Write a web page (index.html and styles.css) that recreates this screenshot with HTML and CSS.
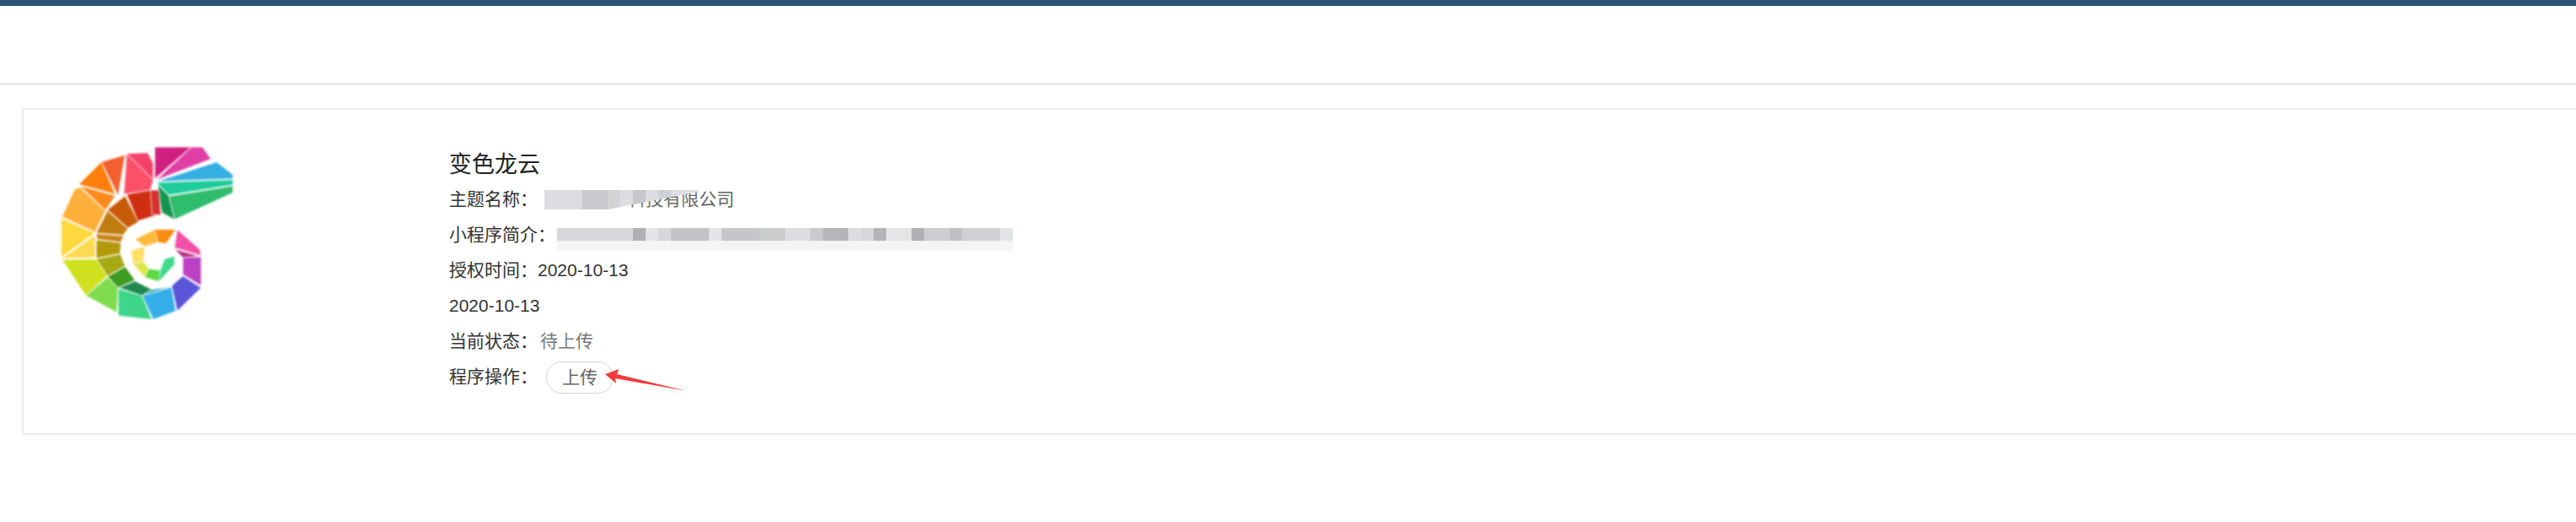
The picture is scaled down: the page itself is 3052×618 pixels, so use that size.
FILE: index.html
```html
<!DOCTYPE html>
<html lang="zh-CN">
<head>
<meta charset="utf-8">
<title>小程序</title>
<link rel="stylesheet" href="styles.css">
</head>
<body>
<div class="topbar"></div>
<header class="header"></header>
<main class="card">
  <svg class="logo" viewBox="96 72 612 612" aria-hidden="true">
    <g stroke="#fff" stroke-opacity=".75" stroke-width="3" stroke-linejoin="round">
      <polygon fill="#d0207f" points="430,72 560,72 430,185"/>
      <polygon fill="#e03fa5" points="560,72 600,72 630,115 435,190"/>
      <polygon fill="#35aee0" points="435,195 650,125 708,170 708,185"/>
      <polygon fill="#1ecb9b" points="437,198 708,188 708,207 480,243"/>
      <polygon fill="#2fbc6c" points="480,247 708,210 708,235 500,330"/>
      <polygon fill="#14944e" points="440,205 480,245 500,330 455,305"/>
      <polygon fill="#f5416a" points="330,95 405,92 425,130 425,190"/>
      <polygon fill="#fb5068" points="330,95 425,190 415,225 320,240"/>
      <polygon fill="#f2602f" points="240,125 325,100 300,245"/>
      <polygon fill="#fd7e0a" points="240,125 160,205 290,240"/>
      <polygon fill="#fd8a1c" points="165,210 290,245 255,298"/>
      <polygon fill="#ffb03a" points="145,222 165,215 255,300 218,375 100,320"/>
      <polygon fill="#ffd83d" points="97,325 218,378 97,465"/>
      <polygon fill="#ffd94f" points="218,385 218,465 100,468"/>
      <polygon fill="#cfe01e" points="100,472 222,470 262,530 185,600"/>
      <polygon fill="#7fdc4e" points="185,600 262,535 300,570 295,660"/>
      <polygon fill="#3ed48a" points="300,575 385,600 420,685 300,672"/>
      <polygon fill="#35aee8" points="385,600 490,570 505,655 425,685"/>
      <polygon fill="#5a54d8" points="490,565 530,530 595,572 510,655"/>
      <polygon fill="#bd3fc4" points="530,465 595,462 595,565 530,525"/>
      <polygon fill="#f24fa6" points="510,365 590,435 595,458 500,430"/>
      <polygon fill="#b42d82" points="500,435 590,460 530,465"/>
      <polygon fill="#cf2f10" points="330,240 415,225 450,310 370,335"/>
      <polygon fill="#d63030" points="415,225 445,225 452,315 420,310"/>
      <polygon fill="#c95a08" points="262,295 325,245 372,338 335,360"/>
      <polygon fill="#c07c10" points="222,378 262,298 335,362 318,385"/>
      <polygon fill="#c7821a" points="222,380 320,388 310,410 225,400"/>
      <polygon fill="#b09a0a" points="222,402 310,412 308,450 222,468"/>
      <polygon fill="#a6a814" points="222,470 308,452 325,495 262,530"/>
      <polygon fill="#3e9a20" points="262,532 325,497 360,545 300,572"/>
      <polygon fill="#1f8a50" points="302,572 360,548 420,578 385,600"/>
      <polygon fill="#2aa8c0" points="385,600 420,578 490,568"/>
    </g>
    <g stroke="#fff" stroke-opacity=".7" stroke-width="2" stroke-linejoin="round">
      <polygon fill="#fb8c12" points="430,365 505,365 470,415 440,410"/>
      <polygon fill="#fdb93a" points="360,400 430,365 440,410 395,425"/>
      <polygon fill="#ffdf66" points="345,440 395,425 390,480 355,490"/>
      <polygon fill="#dbe64a" points="355,490 390,480 410,505 395,535"/>
      <polygon fill="#5ed845" points="395,535 410,505 450,510 445,550"/>
      <polygon fill="#3ed88e" points="445,550 450,510 465,470 500,460 500,490"/>
    </g>
  </svg>
  <section class="info">
    <h1 class="title">变色龙云</h1>
    <p class="row"><span class="label">主题名称：</span><span class="company">科技有限公司</span>
      <svg class="mosaic mosaic-name" width="190" height="23" aria-hidden="true">
        <polygon class="mosaic-base" points="0,0 182,0 182,2 75,23 0,23"/>
        <polygon fill="#c9cacd" points="45,0 75,0 75,23 45,23"/>
        <polygon fill="#d3d4d6" points="75,0 90,0 90,20 75,23"/>
        <polygon fill="#c6c7cb" points="105,0 120,0 120,14 105,17"/>
        <polygon fill="#cfd0d3" points="135,0 150,0 150,8 135,11"/>
      </svg>
    </p>
    <p class="row"><span class="label">小程序简介：</span>
      <svg class="mosaic mosaic-intro" width="540" height="27" aria-hidden="true">
        <rect width="540" height="15" fill="#d6d7da"/>
        <rect y="15" width="540" height="12" fill="#f4f4f5"/>
        <rect x="90" width="15" height="15" fill="#aeb0b4"/>
        <rect x="105" width="15" height="15" fill="#e3e4e6"/>
        <rect x="135" width="45" height="15" fill="#c2c3c7"/>
        <rect x="180" width="15" height="15" fill="#e3e4e6"/>
        <rect x="195" width="60" height="15" fill="#c5c6c9"/>
        <rect x="240" width="30" height="15" fill="#cbccce"/>
        <rect x="270" width="30" height="15" fill="#dcdde0"/>
        <rect x="300" width="15" height="15" fill="#c9cacd"/>
        <rect x="315" width="30" height="15" fill="#b5b6ba"/>
        <rect x="345" width="15" height="15" fill="#dcdde0"/>
        <rect x="375" width="15" height="15" fill="#b3b4b8"/>
        <rect x="390" width="30" height="15" fill="#e4e5e7"/>
        <rect x="420" width="15" height="15" fill="#aeb0b4"/>
        <rect x="435" width="30" height="15" fill="#cdced1"/>
        <rect x="465" width="15" height="15" fill="#bfc0c3"/>
        <rect x="480" width="45" height="15" fill="#cfd0d3"/>
        <rect x="525" width="15" height="15" fill="#e3e4e6"/>
      </svg>
    </p>
    <p class="row"><span class="label">授权时间：</span>2020-10-13</p>
    <p class="row">2020-10-13</p>
    <p class="row"><span class="label">当前状态：</span><span class="status">待上传</span></p>
    <div class="row">
      <span class="label">程序操作：</span><button class="upload" type="button">上传</button>
      <svg class="arrow" width="100" height="30" viewBox="0 0 100 30" aria-hidden="true">
        <polygon fill="#f23b3b" points="0,8 16,2 14,8 97,28 12,13 13,19"/>
      </svg>
    </div>
  </section>
</main>
</body>
</html>
```

FILE: styles.css
```css
* {
  box-sizing: border-box;
}

html,
body {
  margin: 0;
  overflow: hidden;
  background: #fff;
}

body {
  font-family: "Liberation Sans", "Noto Sans CJK SC", sans-serif;
  font-size: 21px;
  color: #333;
}

.topbar {
  height: 7px;
  background: #2c5578;
}

.header {
  height: 94px;
  border-bottom: 3px solid #e9e9e9;
}

.card {
  display: flex;
  margin: 27px -10px 0 26px;
  padding: 44px 0 45px 44px;
  border: 2px solid #ececec;
}

.logo {
  flex: none;
  width: 204px;
  height: 204px;
  margin-right: 256px;
  filter: blur(1.2px);
}

.info {
  position: relative;
}

.title {
  margin: 0;
  font-size: 27px;
  font-weight: 400;
  line-height: 42px;
  color: #222;
}

.row {
  position: relative;
  height: 42px;
  margin: 0;
  line-height: 40px;
  white-space: nowrap;
}

.company {
  margin-left: 107px;
  color: #666;
}

.status {
  margin-left: 3px;
  color: #777;
}

.upload {
  width: 80px;
  height: 38px;
  margin-left: 10px;
  padding: 0;
  border: 1px solid #d4d4d4;
  border-radius: 19px;
  background: #fff;
  font: inherit;
  line-height: 34px;
  color: #666;
  vertical-align: middle;
}

.mosaic {
  position: absolute;
}

.mosaic-base {
  fill: #dcdde0;
}

.mosaic-name {
  left: 113px;
  top: 9px;
}

.mosaic-intro {
  left: 128px;
  top: 12px;
}

.arrow {
  position: absolute;
  left: 185px;
  top: 9px;
}
```
